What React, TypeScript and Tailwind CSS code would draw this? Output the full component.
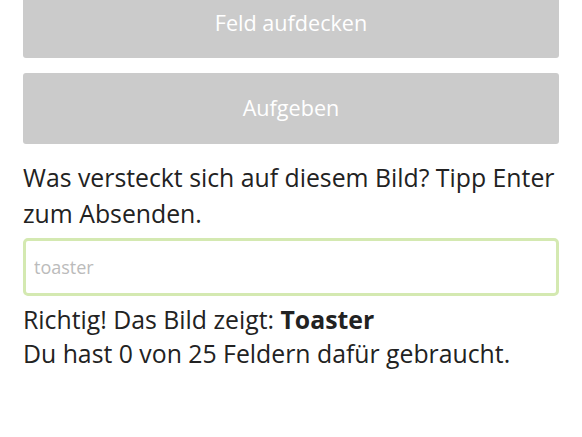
export default function App() {
  return (
    <div className="min-h-screen bg-white font-['Open_Sans',sans-serif] text-[#222]">
      <div className="mx-[23px] -mt-[12px] flex flex-col">
        <button className="h-[70px] w-full rounded-[3px] bg-[#cbcbcb] text-[21.6px] text-white">
          Feld aufdecken
        </button>
        <button className="mt-[15px] h-[71px] w-full rounded-[3px] bg-[#cbcbcb] text-[21.6px] text-white">
          Aufgeben
        </button>
        <p className="mt-[15px] text-[24.8px] leading-[36px]">
          Was versteckt sich auf diesem Bild? Tipp Enter zum Absenden.
        </p>
        <input
          className="mt-[7px] h-[58px] w-full rounded-[5px] border-[3px] border-[#d4e9b1] px-[8px] text-[18px] text-[#333] outline-none placeholder:text-[#bbb]"
          placeholder="toaster"
        />
        <div className="mt-[6px] text-[24.8px] leading-[34px]">
          <p>
            Richtig! Das Bild zeigt: <b className="font-bold">Toaster</b>
          </p>
          <p>Du hast 0 von 25 Feldern dafür gebraucht.</p>
        </div>
      </div>
    </div>
  );
}
